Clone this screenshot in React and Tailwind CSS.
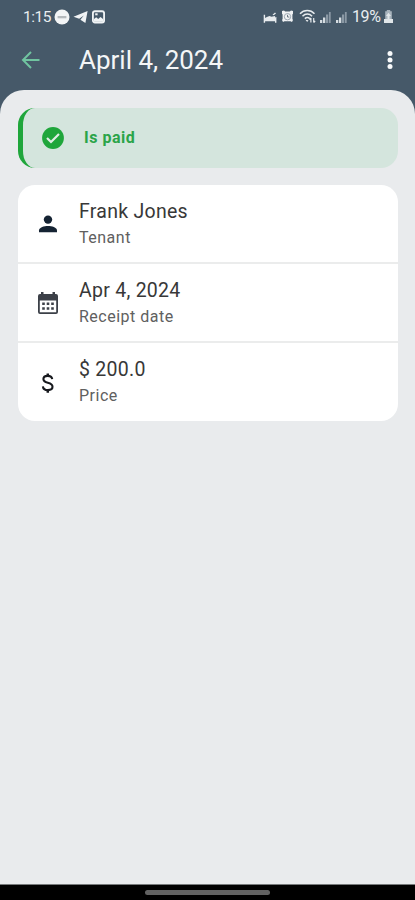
function DetailRow({ icon, title, label, last }) {
  return (
    <div className={`flex items-center pl-[19px] pt-[2px] ${last ? "h-[78px]" : "h-[79px] border-b-2 border-[#ebecec]"}`}>
      <div className="flex w-[42px] shrink-0 items-center pb-[1px]">{icon}</div>
      <div className="flex flex-col">
        <span className="whitespace-nowrap text-[19.5px] leading-[26px] tracking-[0.27px] text-[#383838]">{title}</span>
        <span className="whitespace-nowrap text-[16px] leading-[26px] tracking-[0.5px] text-[#606060]">{label}</span>
      </div>
    </div>
  );
}

function PersonIcon() {
  return (
    <svg width="22" height="22" viewBox="0 0 22 22" fill="#152333">
      <circle cx="11" cy="6.6" r="4.2" />
      <path d="M2 19.2v-1.8c0-3 5.3-4.4 9-4.4s9 1.4 9 4.4v1.8z" />
    </svg>
  );
}

function CalendarIcon() {
  return (
    <svg width="22" height="24" viewBox="0 0 22 24" fill="#3c4048">
      <path fillRule="evenodd" d="M3 3h1V1h2.5v2h9V1H18v2h1a2 2 0 0 1 2 2v16a2 2 0 0 1-2 2H3a2 2 0 0 1-2-2V5a2 2 0 0 1 2-2zm-.2 6.4v11.8h16.4V9.4z" />
      <path d="M5.2 11.4h2.6v2.6H5.2zM9.7 11.4h2.6v2.6H9.7zM14.2 11.4h2.6v2.6h-2.6zM5.2 16.2h2.6v2.6H5.2zM9.7 16.2h2.6v2.6H9.7zM14.2 16.2h2.6v2.6h-2.6z" />
    </svg>
  );
}

function DollarIcon() {
  return (
    <svg width="22" height="24" viewBox="0 0 22 24" fill="none" stroke="#17191e" strokeWidth="2.1">
      <path d="M15.2 8.2C14.8 5.8 13 4.9 10.7 4.9C8.1 4.9 6.4 6.1 6.4 8.1C6.4 10.2 8 11.1 10.8 11.8C13.8 12.6 15.5 13.6 15.5 15.8C15.5 17.9 13.7 19.1 10.9 19.1C8 19.1 6.1 17.8 5.9 15.3" />
      <path d="M10.8 2.4v3M10.8 18.8v3" strokeWidth="2.5" />
    </svg>
  );
}

function Signal() {
  return (
    <svg width="11" height="12" viewBox="0 0 11 12">
      <path d="M0 9h2.3v3H0zM3 6.5h2.3V12H3z" fill="#d5dce1" />
      <path d="M6 3.5h2.2V12H6zM8.9 1h1.8v11H8.9z" fill="#8b99a5" />
    </svg>
  );
}

function StatusBar() {
  return (
    <div className="flex h-[33px] items-center pl-[23px] pr-[22px] text-[#e9edf0]">
      <span className="w-[31px] whitespace-nowrap text-[15.5px] leading-[18px] tracking-[-0.5px]">1:15</span>
      <svg width="16" height="16" viewBox="0 0 16 16" className="shrink-0">
        <circle cx="8" cy="8" r="7.5" fill="#f3f5f6" />
        <path d="M3.6 7h8.8v2.3H3.6z" fill="#b5babd" />
      </svg>
      <svg width="15" height="14" viewBox="0 0 15 14" className="ml-[3px] shrink-0" fill="#f0f3f5">
        <path d="M.5 6.8 14.6 1l-2.2 12-5-3.2 3.4-4.4-4.6 3.4z" />
      </svg>
      <svg width="13" height="14" viewBox="0 0 13 14" className="ml-[4px] shrink-0">
        <rect x=".9" y="1.2" width="11.2" height="11.3" rx="2" fill="none" stroke="#f0f3f5" strokeWidth="1.9" />
        <path d="m2 11.8 0-2.8 2.2-1.7 2 1.8 2.3-2 2.5 2v2.7z" fill="#f0f3f5" />
        <path d="M3.2 3.3h2.4v2H3.2z" fill="#f0f3f5" />
      </svg>
      <div className="ml-auto flex items-center">
        <svg width="14" height="13" viewBox="0 0 14 13" fill="#e7ebee">
          <path d="M.7 4.8h1.4v3h10.3V7h1v5.7H12v-1.4H2.1v1.4H.7z" />
          <path d="m3.2 7.2 3.3-1.1 2 .7 3.6-.8v2.4H3.2zM9.5 4.8 12 2.6l1 .8-2.3 1.8z" />
        </svg>
        <svg width="13" height="13" viewBox="0 0 13 13" className="ml-[4px]">
          <path d="m1 1 2-.5 1.2 1h4.6l1.2-1 2 .5v2.8l-.6.7v4.5l.6 1-1 2-1.5-.7H3.5L2 12 1 10l.6-1V4.5L1 3.8z" fill="#f0f2f4" />
          <circle cx="6.5" cy="6.7" r="3.2" fill="none" stroke="#8997a3" strokeWidth=".8" />
          <path d="M6.5 4.8v2.2h1.8" fill="none" stroke="#5d6d7a" strokeWidth=".9" />
        </svg>
        <svg width="17" height="15" viewBox="0 0 17 15" className="ml-[5px]" fill="none" stroke="#e7ebee" strokeWidth="1.5">
          <path d="M1 4.8C5 .5 11.5.5 15.5 4.8M3.5 7.2c2.8-2.8 6.8-2.8 9.6 0M5.8 9.6c1.6-1.4 3.5-1.4 5 0" />
          <path d="m6.4 10.7 1.8 2.2 1.3-1.6z" fill="#e7ebee" stroke="none" />
          <path d="M11.9 13.5V9m-1.5 1.5L11.9 9M14.7 9v4.5m0 0 1.5-1.6" strokeWidth="1.2" />
        </svg>
        <div className="ml-[4px] flex gap-[5px]">
          <Signal />
          <Signal />
        </div>
        <span className="ml-[5px] w-[30px] whitespace-nowrap text-[16px] leading-[18px] tracking-[-0.4px]">19%</span>
        <svg width="9" height="13" viewBox="0 0 9 13" className="ml-[2px]">
          <path d="M2.8 0h3.4v1.2h1.6V9H1.2V1.2h1.6z" fill="#a9b4bd" />
          <path d="M4.5 2.8 7 6H5.5v3H9v4H0V9h3.5V6H2z" fill="#e1e6e9" />
        </svg>
      </div>
    </div>
  );
}

export default function App() {
  return (
    <div className="flex h-[900px] w-[415px] flex-col overflow-hidden bg-[#465969] font-[Roboto,sans-serif]">
      <StatusBar />
      <header className="flex h-[57px] shrink-0 items-center pb-[3px] pl-[21px] pr-[22px]">
        <svg width="20" height="20" viewBox="0 0 20 20" className="shrink-0" fill="none" stroke="#70c4a0" strokeWidth="2">
          <path d="M18.5 10H2.5M10 2 2 10l8 8" />
        </svg>
        <h1 className="ml-[38px] whitespace-nowrap text-[26px] leading-[32px] text-[#f4f6f7]">April 4, 2024</h1>
        <svg width="6" height="20" viewBox="0 0 6 20" className="ml-auto" fill="#f8fafb">
          <circle cx="3" cy="3.4" r="2.5" />
          <circle cx="3" cy="10" r="2.5" />
          <circle cx="3" cy="16.6" r="2.5" />
        </svg>
      </header>
      <main className="flex h-[794px] shrink-0 flex-col gap-[17px] rounded-t-[24px] bg-[#e9ebed] pl-[18px] pr-[17px] pt-[18px]">
        <section className="flex h-[60px] shrink-0 items-center rounded-[17px] border-l-[5px] border-[#1fa63b] bg-[#d4e5dd] pl-[19px]">
          <svg width="22" height="22" viewBox="0 0 22 22">
            <circle cx="11" cy="11" r="10.9" fill="#1fa63b" />
            <path d="m5 11 4 4 8-8" fill="none" stroke="#e1eee6" strokeWidth="2.2" />
          </svg>
          <span className="ml-[20px] whitespace-nowrap text-[16px] font-bold leading-[20px] tracking-[0.5px] text-[#2ba449]">Is paid</span>
        </section>
        <section className="flex flex-col overflow-hidden rounded-[17px] bg-white">
          <DetailRow icon={<PersonIcon />} title="Frank Jones" label="Tenant" />
          <DetailRow icon={<CalendarIcon />} title="Apr 4, 2024" label="Receipt date" />
          <DetailRow icon={<DollarIcon />} title="$ 200.0" label="Price" last />
        </section>
      </main>
      <footer className="flex h-[16px] shrink-0 justify-center border-t border-[#777a7b] bg-black pt-[5px]">
        <div className="h-[5px] w-[125px] rounded-full bg-[#626262]" />
      </footer>
    </div>
  );
}
